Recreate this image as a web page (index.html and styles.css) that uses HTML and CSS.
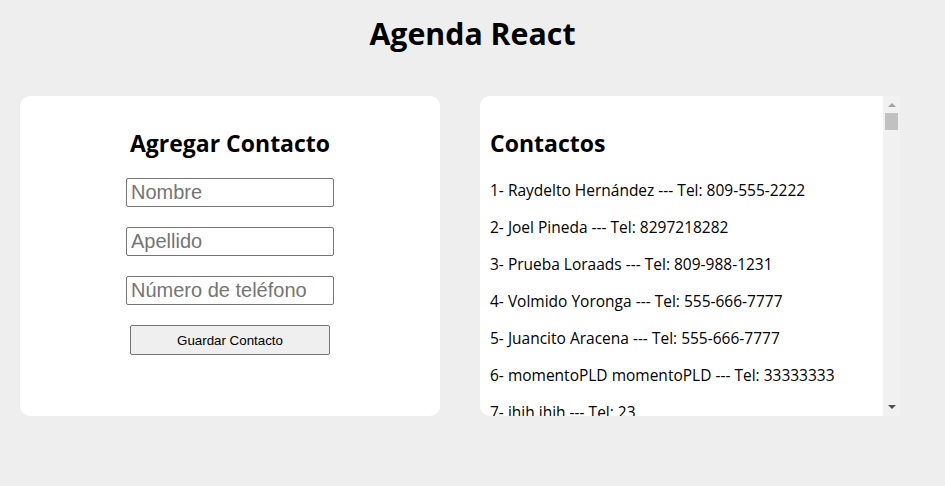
FILE: index.html
```html
<!DOCTYPE html>
<html lang="es">
<head>
<meta charset="utf-8">
<title>Agenda React</title>
<link rel="stylesheet" href="styles.css">
</head>
<body>
<h1 class="title">Agenda React</h1>
<div class="cards">
  <div class="card form-card">
    <h2 class="card-title">Agregar Contacto</h2>
    <input class="field" type="text" placeholder="Nombre">
    <input class="field" type="text" placeholder="Apellido">
    <input class="field" type="text" placeholder="Número de teléfono">
    <button class="save" type="button">Guardar Contacto</button>
  </div>
  <div class="card list-card">
    <div class="list">
      <h2 class="card-title">Contactos</h2>
      <p class="item">1- Raydelto Hernández --- Tel: 809-555-2222</p>
      <p class="item">2- Joel Pineda --- Tel: 8297218282</p>
      <p class="item">3- Prueba Loraads --- Tel: 809-988-1231</p>
      <p class="item">4- Volmido Yoronga --- Tel: 555-666-7777</p>
      <p class="item">5- Juancito Aracena --- Tel: 555-666-7777</p>
      <p class="item">6- momentoPLD momentoPLD --- Tel: 33333333</p>
      <p class="item">7- ihih ihih --- Tel: 23</p>
    </div>
    <div class="scrollbar">
      <span class="arrow-up"></span>
      <span class="thumb"></span>
      <span class="track"></span>
      <span class="arrow-down"></span>
    </div>
  </div>
</div>
</body>
</html>
```
FILE: styles.css
```css
html, body {
  margin: 0;
  padding: 0;
}
body {
  background: #eeeeee;
  font-family: "Open Sans", "Noto Sans", sans-serif;
  color: #000;
  width: 945px;
  height: 486px;
  overflow: hidden;
}
.title {
  margin: 12.5px 0 41.5px;
  font-size: 30.3px;
  line-height: 42px;
  font-weight: 700;
  text-align: center;
}
.cards {
  display: flex;
  gap: 40px;
  padding: 0 20px;
}
.card {
  width: 420px;
  height: 320px;
  box-sizing: border-box;
  background: #fff;
}
.form-card {
  border-radius: 10px;
  padding: 10.5px 10px 9px;
  text-align: center;
}
.card-title {
  margin: 20px 0 19.5px;
  font-size: 23px;
  line-height: 32px;
  font-weight: 700;
}
.field {
  display: block;
  box-sizing: border-box;
  width: 208px;
  height: 29px;
  margin: 0 auto 20px;
  padding: 1px 4px;
  border: 1px solid #767676;
  border-radius: 2px;
  font-family: "Liberation Sans", Arial, sans-serif;
  font-size: 20px;
  color: #000;
  background: #fff;
}
.field::placeholder {
  color: #757575;
}
.save {
  display: block;
  box-sizing: border-box;
  width: 200px;
  height: 30px;
  margin: 0 auto;
  padding: 0;
  border: 1px solid #767676;
  border-radius: 2px;
  background: #efefef;
  font-family: "Liberation Sans", Arial, sans-serif;
  font-size: 13.33px;
  color: #000;
}
.list-card {
  display: flex;
  border-radius: 10px 0 0 10px;
  overflow: hidden;
}
.list {
  flex: 1;
  overflow: hidden;
  padding: 10.5px 10px 0;
}
.item {
  margin: 16px 0;
  font-size: 15.5px;
  line-height: 21px;
  white-space: nowrap;
}
.card-title + .item {
  margin-top: 21px;
}
.scrollbar {
  width: 17px;
  background: #f1f1f1;
  display: flex;
  flex-direction: column;
  align-items: center;
}
.arrow-up {
  margin-top: 7px;
  width: 0;
  height: 0;
  border-left: 4px solid transparent;
  border-right: 4px solid transparent;
  border-bottom: 4px solid #a3a3a3;
}
.thumb {
  margin-top: 6px;
  width: 13px;
  height: 17px;
  background: #c1c1c1;
}
.track {
  flex: 1;
}
.arrow-down {
  margin-bottom: 7px;
  width: 0;
  height: 0;
  border-left: 4px solid transparent;
  border-right: 4px solid transparent;
  border-top: 4px solid #505050;
}
```
